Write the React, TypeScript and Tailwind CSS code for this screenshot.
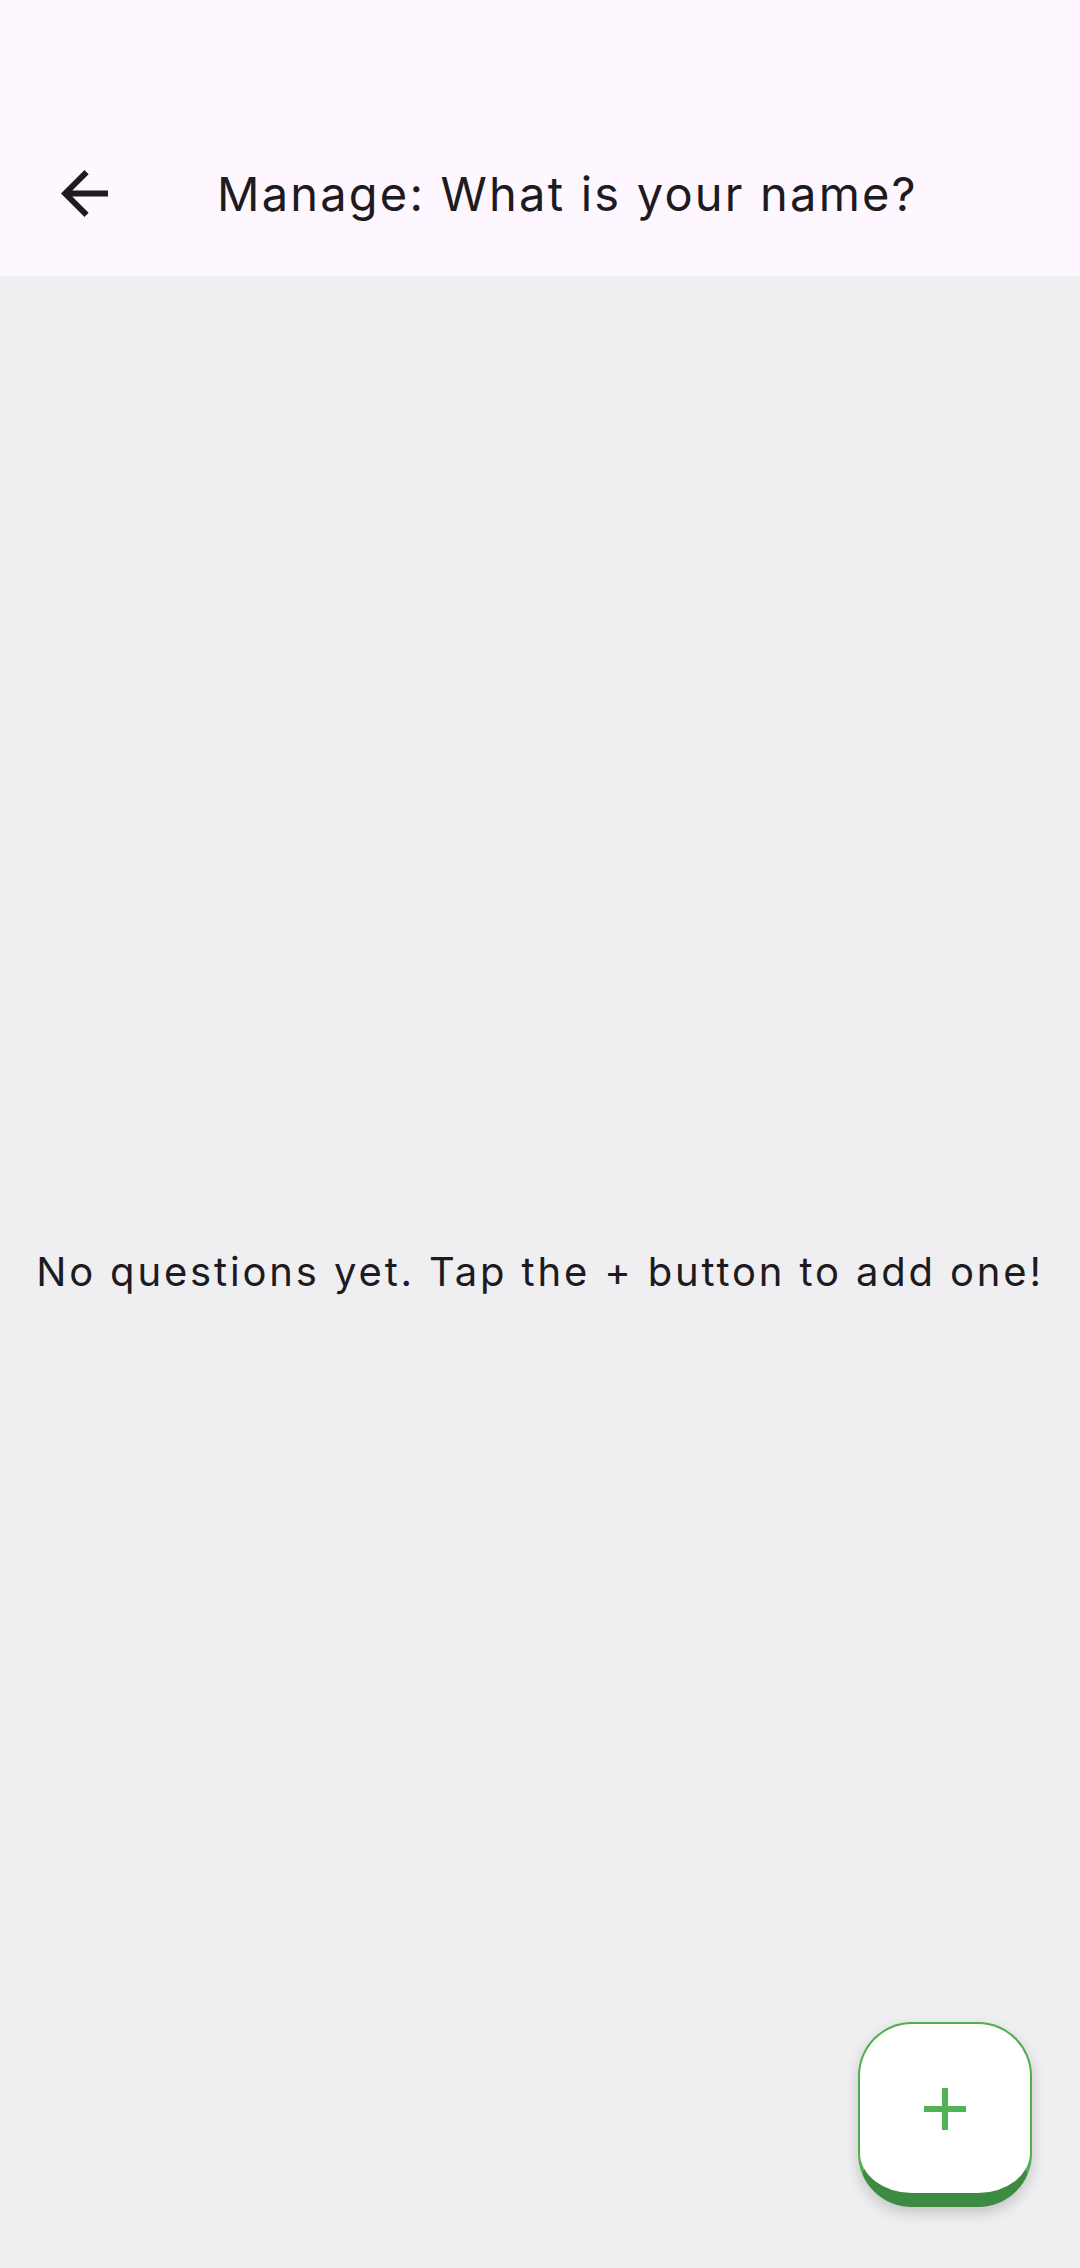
import React from "react";

function BackArrow() {
  return (
    <svg viewBox="4 4 16 16" className="w-[47px] h-[47px]" fill="#1d1b20">
      <path d="M20 11H7.83l5.59-5.59L12 4l-8 8 8 8 1.41-1.41L7.83 13H20v-2z" />
    </svg>
  );
}

export default function App() {
  return (
    <div
      className="relative w-[1080px] h-[2268px] flex flex-col bg-[#efeff2] text-[#1d1b20] overflow-hidden"
      style={{ fontFamily: "Inter, 'Noto Sans', sans-serif" }}
    >
      {/* App bar */}
      <header className="h-[276px] shrink-0 bg-[#fef7ff] pt-[110px]">
        <div className="h-[166px] flex items-center">
          <button className="w-[217px] h-full flex items-center pl-[61px]">
            <BackArrow />
          </button>
          <h1 className="text-[47px] font-normal leading-none tracking-[2.2px]">
            Manage: What is your name?
          </h1>
        </div>
      </header>

      {/* Empty state */}
      <main className="flex-1 flex items-center justify-center">
        <p className="text-[40px] leading-none tracking-[2.85px]">
          No questions yet. Tap the + button to add one!
        </p>
      </main>

      {/* FAB */}
      <button className="absolute right-[48px] bottom-[61px] w-[174px] h-[185px] rounded-[54px] bg-white border-2 border-[#4caf50] border-b-[14px] border-b-[#3d8b40] shadow-[0_6px_14px_rgba(0,0,0,0.18)] flex items-center justify-center">
        <svg viewBox="0 0 42 42" className="w-[42px] h-[42px]">
          <rect x="18" y="0" width="6" height="42" fill="#52b256" />
          <rect x="0" y="18" width="42" height="6" fill="#52b256" />
        </svg>
      </button>
    </div>
  );
}
